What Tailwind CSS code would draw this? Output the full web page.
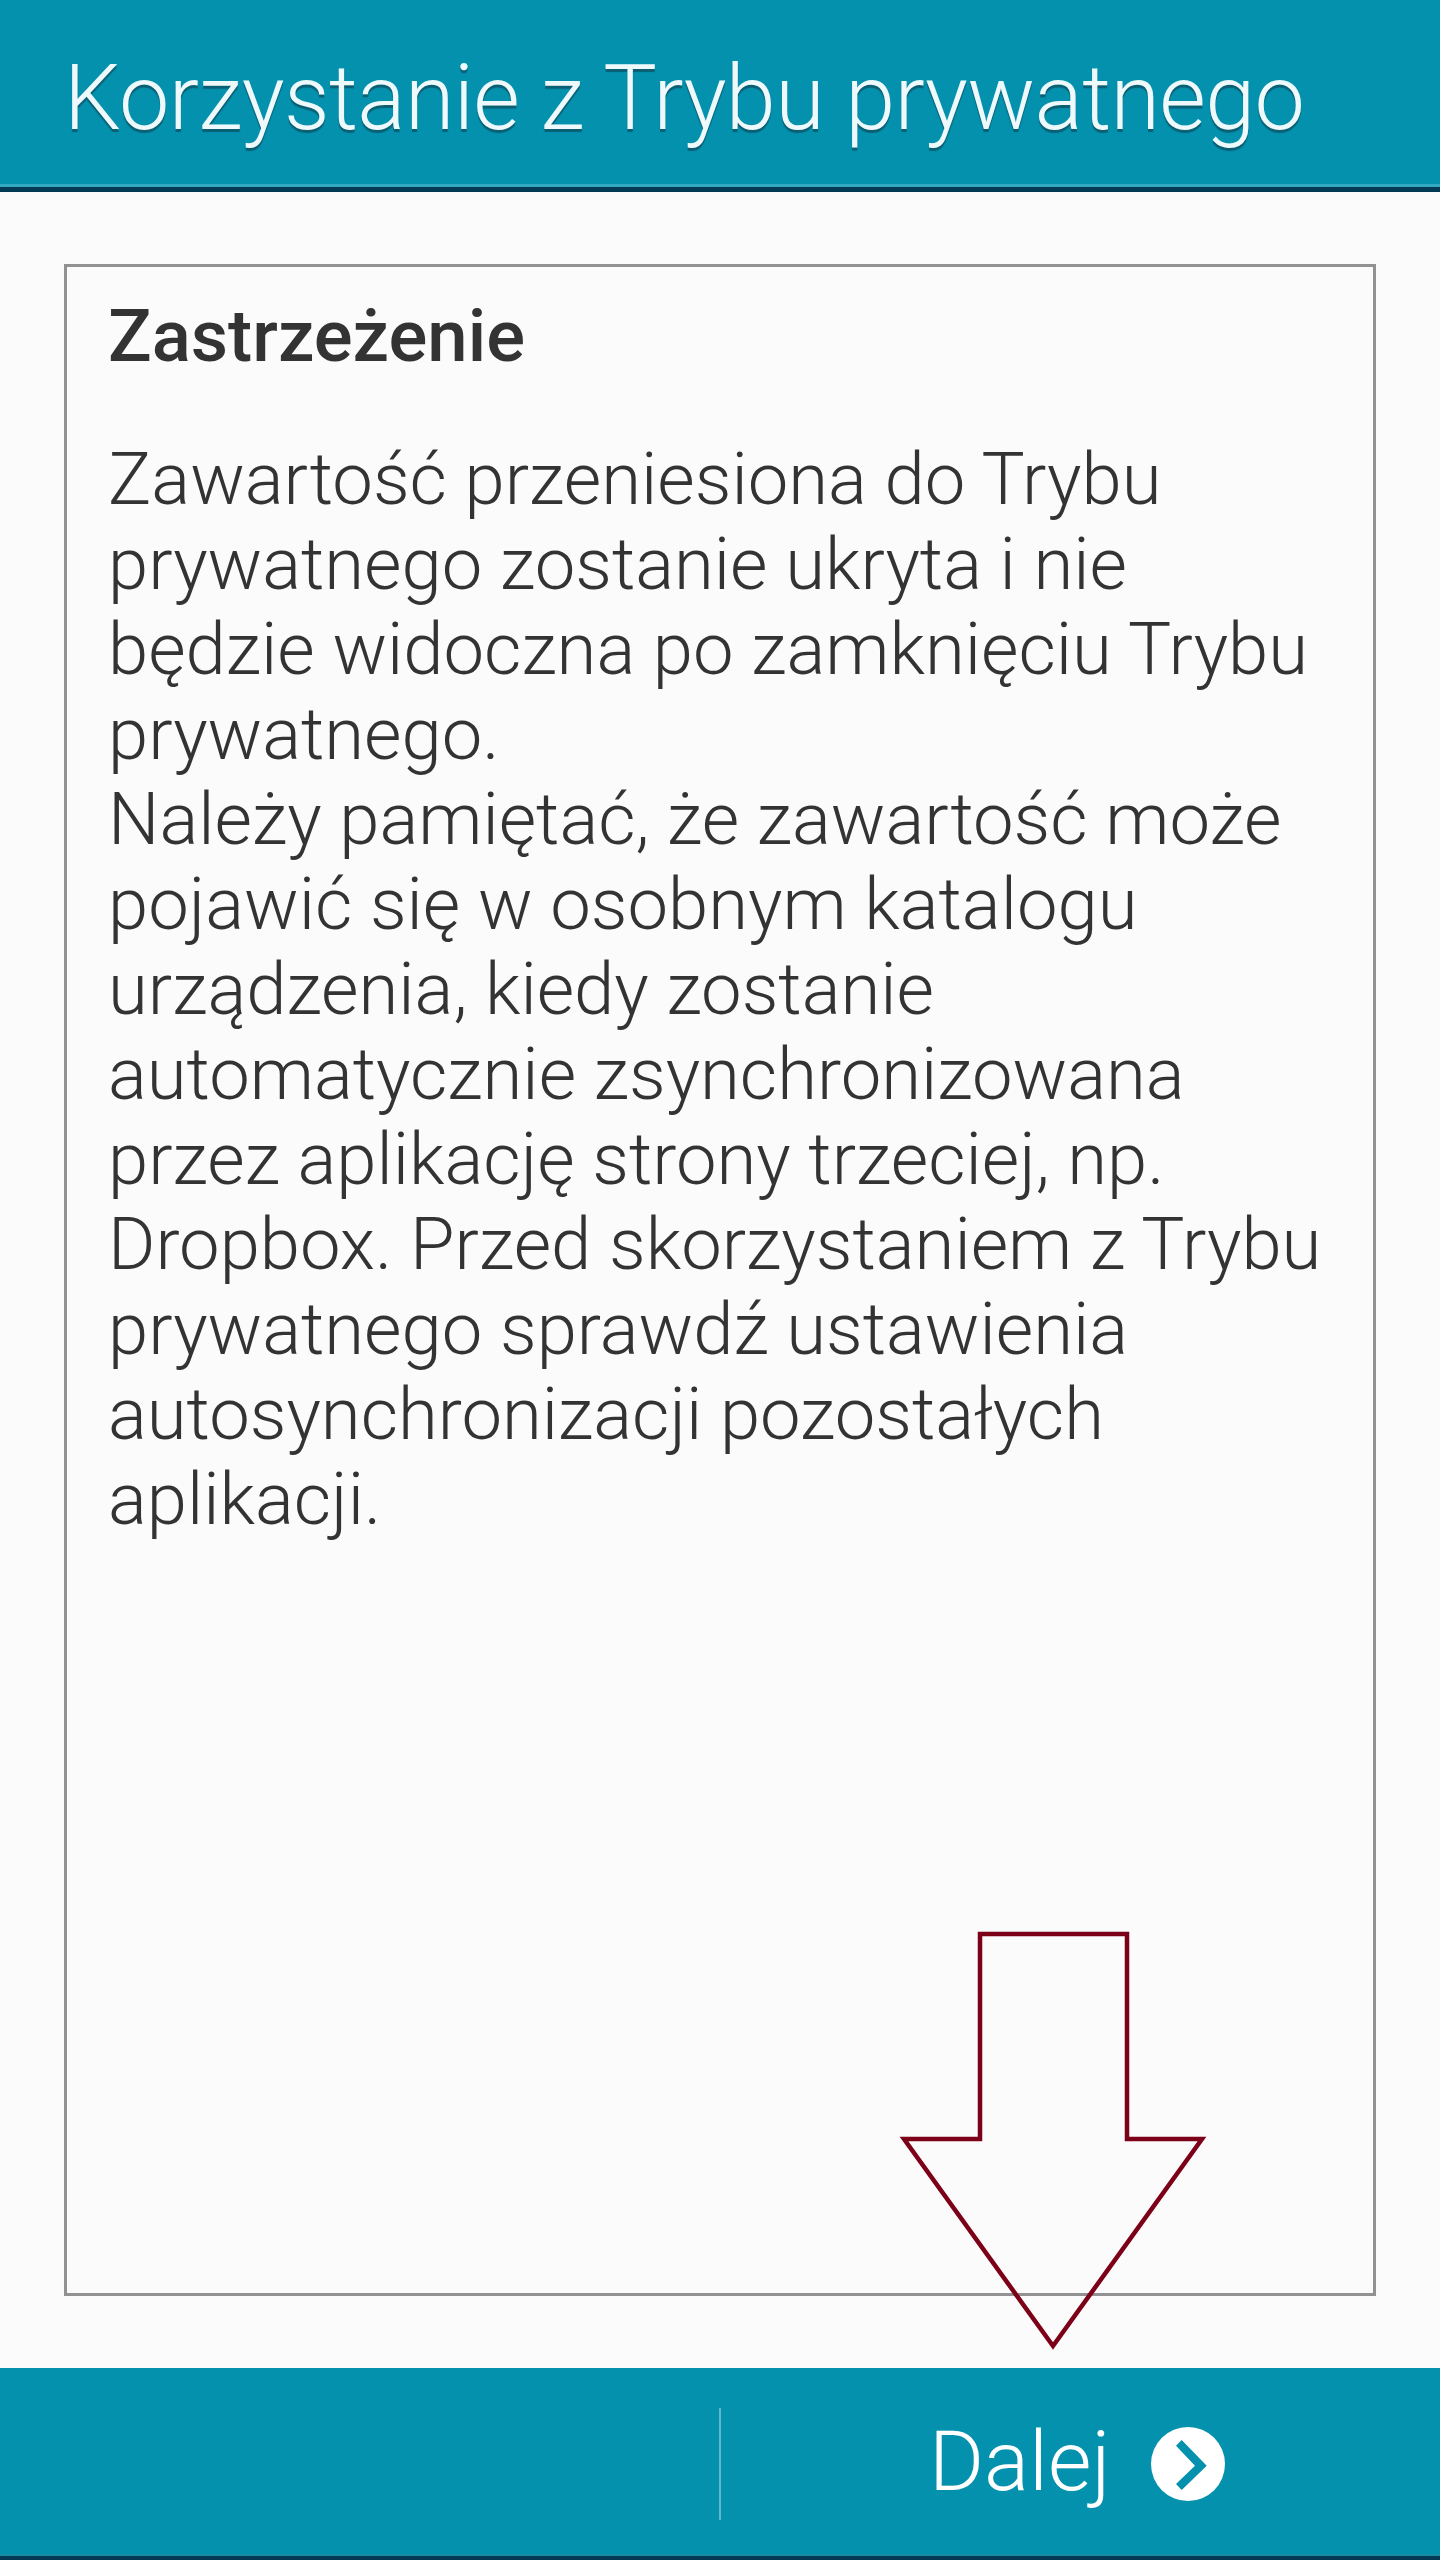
<!DOCTYPE html>
<html lang="pl">
  <head>
    <meta charset="UTF-8" />
    <title>Korzystanie z Trybu prywatnego</title>
    <script src="https://cdn.jsdelivr.net/npm/@tailwindcss/browser@4"></script>
  </head>
  <body class="bg-[#fbfbfb]">
    <div class="relative flex flex-col w-[1440px] h-[2560px] font-['Roboto',sans-serif]">
      <!-- header -->
      <header class="h-[192px] shrink-0 bg-[#0391ae] border-b-[5px] border-[#023a55] flex flex-col">
        <h1 class="flex-1 flex items-center pl-[64px] pt-[13px] text-[90px] tracking-[-0.62px] font-light text-[#eef9fb] [text-shadow:0_3px_1px_#0b5f73] whitespace-nowrap">Korzystanie z Trybu prywatnego</h1>
        <div class="h-[3px] bg-[#35a8c1]"></div>
      </header>

      <!-- disclaimer -->
      <main class="flex-1 px-[64px] pt-[72px] pb-[72px] flex">
        <section class="flex-1 border-[3px] border-[#929292] pl-[41px] pt-[22px]">
          <h2 class="text-[72.5px] leading-[96px] font-medium text-[#333]">Zastrzeżenie</h2>
          <p class="mt-[52px] text-[72.4px] leading-[85px] font-light text-[#333] whitespace-nowrap">Zawartość przeniesiona do Trybu<br />prywatnego zostanie ukryta i nie<br />będzie widoczna po zamknięciu Trybu<br />prywatnego.<br />Należy pamiętać, że zawartość może<br />pojawić się w osobnym katalogu<br />urządzenia, kiedy zostanie<br />automatycznie zsynchronizowana<br />przez aplikację strony trzeciej, np.<br />Dropbox. Przed skorzystaniem z Trybu<br />prywatnego sprawdź ustawienia<br />autosynchronizacji pozostałych<br />aplikacji.</p>
        </section>
      </main>

      <!-- footer -->
      <footer class="h-[192px] shrink-0 bg-[#0391ae] border-b-[4px] border-[#023a55] flex flex-col">
        <div class="flex-1 flex items-center pt-[6px]">
          <div class="w-[721px] h-[112px] border-r-[2px] border-[#62b9cc]"></div>
          <div class="flex-1 flex items-center pl-[208px]">
            <span class="block mb-[4px] text-[84px] font-light text-white leading-none">Dalej</span>
            <svg class="ml-[40px] w-[74px] h-[74px]" viewBox="0 0 74 74">
              <circle cx="37" cy="37" r="37" fill="#fff" />
              <path d="M30.7 13 L25 18.7 L44 38.7 L25 57 L30.7 63 L55.7 38.7 Z" fill="#0391ae" />
            </svg>
          </div>
        </div>
        <div class="h-[2px] bg-[#1b8ca6]"></div>
      </footer>

      <!-- annotation arrow -->
      <svg class="absolute left-0 top-0" width="1440" height="2560" viewBox="0 0 1440 2560" fill="none">
        <path d="M980 1934 H1127 V2139 H1202 L1053 2346 L904 2139 H980 Z" stroke="#7d0019" stroke-width="4.5" stroke-linejoin="miter" />
      </svg>
    </div>
  </body>
</html>
